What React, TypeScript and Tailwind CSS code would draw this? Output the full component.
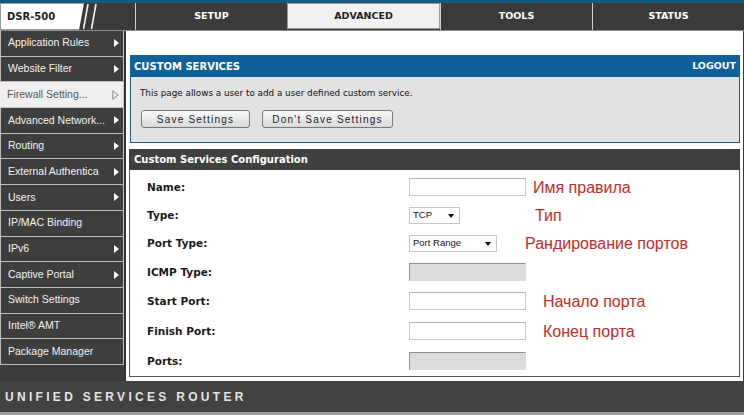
import React from "react";

type SideItem = {
  label: string;
  arrow: "solid" | "outline" | "none";
  active?: boolean;
};

type FormRow = {
  label: string;
  kind: "input" | "select" | "disabled";
  value?: string;
  selectW?: string;
  note?: string;
  noteMl?: string;
  h: string;
};

const sideItems: SideItem[] = [
  { label: "Application Rules", arrow: "solid" },
  { label: "Website Filter", arrow: "solid" },
  { label: "Firewall Setting...", arrow: "outline", active: true },
  { label: "Advanced Network...", arrow: "solid" },
  { label: "Routing", arrow: "solid" },
  { label: "External Authentica", arrow: "solid" },
  { label: "Users", arrow: "solid" },
  { label: "IP/MAC Binding", arrow: "none" },
  { label: "IPv6", arrow: "solid" },
  { label: "Captive Portal", arrow: "solid" },
  { label: "Switch Settings", arrow: "none" },
  { label: "Intel® AMT", arrow: "none" },
  { label: "Package Manager", arrow: "none" },
];

const rows: FormRow[] = [
  { label: "Name:", kind: "input", note: "Имя правила", noteMl: "ml-[7px]", h: "h-[28px]" },
  { label: "Type:", kind: "select", value: "TCP", selectW: "w-[51px]", note: "Тип", noteMl: "ml-[9px]", h: "h-[28px]" },
  { label: "Port Type:", kind: "select", value: "Port Range", selectW: "w-[88px]", note: "Рандирование портов", noteMl: "-ml-[1px]", h: "h-[28px]" },
  { label: "ICMP Type:", kind: "disabled", h: "h-[29px]" },
  { label: "Start Port:", kind: "input", note: "Начало порта", noteMl: "ml-[17px]", h: "h-[30px]" },
  { label: "Finish Port:", kind: "input", note: "Конец порта", noteMl: "ml-[17px]", h: "h-[30px]" },
  { label: "Ports:", kind: "disabled", h: "h-[30px]" },
];

const tabs = ["SETUP", "ADVANCED", "TOOLS", "STATUS"];

function SideArrow({ type }: { type: SideItem["arrow"] }) {
  if (type === "solid") {
    return <span className="w-0 h-0 border-y-[4px] border-y-transparent border-l-[5px] border-l-white" />;
  }
  if (type === "outline") {
    return (
      <svg width="7" height="10" viewBox="0 0 7 10">
        <polygon points="0.8,0.8 6.2,5 0.8,9.2" fill="none" stroke="#8a8a8a" strokeWidth="1" />
      </svg>
    );
  }
  return null;
}

function Header() {
  return (
    <div className="flex h-[28px] bg-[#3b3b3b] border-b border-[#8c8c8c]">
      <div className="flex w-[135px] items-stretch">
        <div className="w-[84px] bg-white border border-[#9a9a9a] [clip-path:polygon(0_0,100%_0,calc(100%-5px)_100%,0_100%)] flex items-center pl-[6px] text-[10px] font-bold text-[#222] font-['DejaVu_Sans',sans-serif]">
          DSR-500
        </div>
        <svg width="16" height="27" viewBox="0 0 16 27" className="-ml-[1px]">
          <line x1="5" y1="1" x2="0.5" y2="26" stroke="#f2f2f2" strokeWidth="1.6" />
          <line x1="13" y1="1" x2="8.5" y2="26" stroke="#f2f2f2" strokeWidth="1.6" />
        </svg>
      </div>
      {tabs.map((t) => (
        <div
          key={t}
          className={
            t === "ADVANCED"
              ? "flex-1 flex items-center justify-center bg-[#f1f1f1] border border-[#9a9a9a] mb-[1px] text-[9.5px] font-bold text-[#222] font-['DejaVu_Sans',sans-serif]"
              : "flex-1 flex items-center justify-center border-l border-[#cfcfcf] text-[9.5px] font-bold text-white font-['DejaVu_Sans',sans-serif]"
          }
        >
          {t}
        </div>
      ))}
    </div>
  );
}

function Sidebar() {
  return (
    <aside className="w-[124px] flex flex-col">
      {sideItems.map((item) => (
        <div
          key={item.label}
          className={
            item.active
              ? "h-[25.7px] flex items-center justify-between pl-[7px] pr-[4px] bg-[#efefef] border-b border-r border-[#c4c4c4] text-[10.5px] text-[#555] font-['Liberation_Sans',Arial,sans-serif]"
              : "h-[25.7px] flex items-center justify-between pl-[7px] pr-[4px] bg-[#3e3e3e] border-b border-r border-l border-[#bcbcbc] text-[10.5px] text-[#f2f2f2] font-['Liberation_Sans',Arial,sans-serif]"
          }
        >
          <span className="whitespace-nowrap">{item.label}</span>
          <SideArrow type={item.arrow} />
        </div>
      ))}
    </aside>
  );
}

function Field({ row }: { row: FormRow }) {
  if (row.kind === "input") {
    return <div className="w-[117px] h-[18px] bg-white border border-[#c9c9c9] border-t-[#b5b5b5]" />;
  }
  if (row.kind === "disabled") {
    return <div className="w-[117px] h-[18px] bg-[#dcdcdc] border border-[#dcdcdc] border-t-[#8f8f8f] border-l-[#8f8f8f]" />;
  }
  return (
    <div className={`${row.selectW} h-[17px] bg-white border border-[#c6c6c6] flex items-center justify-between pl-[3px] pr-[5px] text-[9.5px] text-[#111] font-['Liberation_Sans',Arial,sans-serif]`}>
      <span>{row.value}</span>
      <span className="mt-[2px] w-0 h-0 border-x-[3.5px] border-x-transparent border-t-[4px] border-t-[#111]" />
    </div>
  );
}

function Content() {
  return (
    <main className="flex-1 bg-white border-l-2 border-r border-[#3a3a3a] border-l-[#333] pt-[24px] pl-[4px] pr-[3px] pb-[4px] flex flex-col">
      <section className="flex flex-col">
        <div className="h-[22px] bg-[#10609a] flex items-center justify-between px-[4px] text-white text-[10px] font-bold font-['DejaVu_Sans',sans-serif]">
          <span>CUSTOM SERVICES</span>
          <span className="text-[9.5px]">LOGOUT</span>
        </div>
        <div className="h-[66px] bg-[#e2e2e2] border border-t-0 border-[#1d5d86] pl-[9px] pt-[10px] flex flex-col">
          <p className="text-[8.8px] leading-[12px] text-[#111] font-['DejaVu_Sans',sans-serif]">
            This page allows a user to add a user defined custom service.
          </p>
          <div className="flex gap-[12px] mt-[11px] ml-[1px]">
            <button className="w-[109px] h-[18px] rounded-[3px] border border-[#7a7a7a] bg-gradient-to-b from-[#fafafa] to-[#d9d9d9] text-[10px] tracking-[1.2px] text-[#222] font-['Liberation_Sans',Arial,sans-serif]">
              Save Settings
            </button>
            <button className="w-[131px] h-[18px] rounded-[3px] border border-[#7a7a7a] bg-gradient-to-b from-[#fafafa] to-[#d9d9d9] text-[10px] tracking-[1.2px] text-[#222] font-['Liberation_Sans',Arial,sans-serif]">
              Don't Save Settings
            </button>
          </div>
        </div>
      </section>
      <section className="flex flex-col mt-[6px] -ml-[1px]">
        <div className="h-[21px] bg-[#404040] flex items-center px-[5px] text-white text-[10px] font-bold font-['DejaVu_Sans',sans-serif]">
          Custom Services Configuration
        </div>
        <div className="h-[207px] border border-t-0 border-[#555] pt-[3px] pl-[17px] flex flex-col">
          {rows.map((row) => (
            <div key={row.label} className={`${row.h} flex items-center`}>
              <div className="w-[262px] pt-[2px] text-[10.5px] font-bold text-[#1a1a1a] font-['DejaVu_Sans',sans-serif]">
                {row.label}
              </div>
              <div className="w-[117px] flex">
                <Field row={row} />
              </div>
              {row.note && (
                <span className={`${row.noteMl} pt-[2px] text-[16px] leading-[18px] text-[#c62a2a] font-['Liberation_Sans',Arial,sans-serif]`}>
                  {row.note}
                </span>
              )}
            </div>
          ))}
        </div>
      </section>
    </main>
  );
}

export default function App() {
  return (
    <div className="w-[744px] h-[415px] flex flex-col bg-[#3b3b3b] overflow-hidden">
      <div className="h-[3px] bg-[#1c5880]" />
      <Header />
      <div className="h-[350px] flex">
        <Sidebar />
        <Content />
      </div>
      <footer className="h-[31px] bg-[#424242] flex items-center pl-[5px] text-[12px] font-bold tracking-[3.3px] text-[#e4e4e4] font-['Liberation_Sans',Arial,sans-serif]">
        UNIFIED SERVICES ROUTER
      </footer>
      <div className="h-[3px] bg-[#9c9c9c]" />
    </div>
  );
}
